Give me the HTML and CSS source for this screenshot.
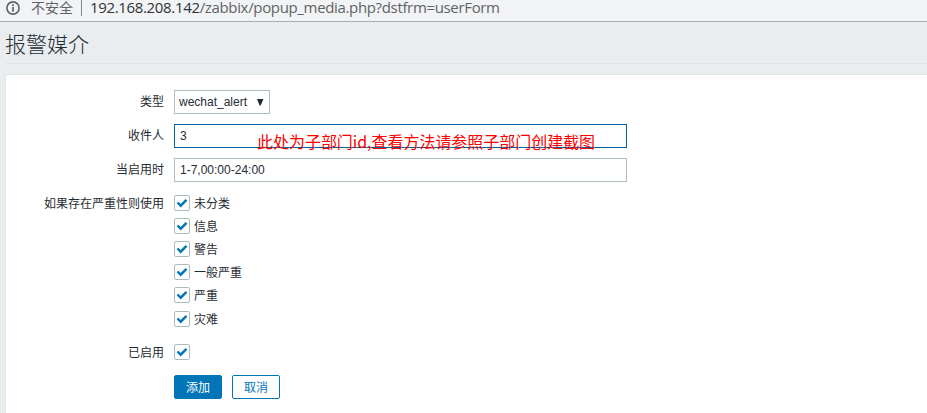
FILE: index.html
```
<!DOCTYPE html>
<html lang="zh-CN">
<head>
<meta charset="utf-8">
<title>报警媒介</title>
<link rel="stylesheet" href="styles.css">
</head>
<body>
<div class="address-bar">
  <svg class="info" width="14" height="14" viewBox="0 0 14 14"><circle cx="7" cy="7" r="6.1" fill="none" stroke="#5f6368" stroke-width="1.6"/><path d="M7 3.2v1.7M7 6v4.8" stroke="#5f6368" stroke-width="1.7"/></svg>
  <span class="insecure">不安全</span>
  <span class="divider"></span>
  <span class="url"><span class="host">192.168.208.142</span>/zabbix/popup_media.php?dstfrm=userForm</span>
</div>
<main>
  <h1>报警媒介</h1>
  <form class="card">
    <div class="row"><label>类型</label><div class="select"><span>wechat_alert</span><svg width="8" height="7" viewBox="0 0 8 7"><path d="M1 0h6.4L4.7 6.5h-1z" fill="#1f2c33"/></svg></div></div>
    <div class="row"><label>收件人</label><div class="field focused">3<span class="note">此处为子部门id,查看方法请参照子部门创建截图</span></div></div>
    <div class="row"><label>当启用时</label><div class="field">1-7,00:00-24:00</div></div>
    <div class="row severity"><label>如果存在严重性则使用</label>
      <div class="checks">
        <div class="check"><span class="box"><svg width="12" height="10" viewBox="0 0 12 10"><path d="M1.5 4.5 4.7 7.7 10.5 1.9"/></svg></span><span class="name">未分类</span></div>
        <div class="check"><span class="box"><svg width="12" height="10" viewBox="0 0 12 10"><path d="M1.5 4.5 4.7 7.7 10.5 1.9"/></svg></span><span class="name">信息</span></div>
        <div class="check"><span class="box"><svg width="12" height="10" viewBox="0 0 12 10"><path d="M1.5 4.5 4.7 7.7 10.5 1.9"/></svg></span><span class="name">警告</span></div>
        <div class="check"><span class="box"><svg width="12" height="10" viewBox="0 0 12 10"><path d="M1.5 4.5 4.7 7.7 10.5 1.9"/></svg></span><span class="name">一般严重</span></div>
        <div class="check"><span class="box"><svg width="12" height="10" viewBox="0 0 12 10"><path d="M1.5 4.5 4.7 7.7 10.5 1.9"/></svg></span><span class="name">严重</span></div>
        <div class="check last"><span class="box"><svg width="12" height="10" viewBox="0 0 12 10"><path d="M1.5 4.5 4.7 7.7 10.5 1.9"/></svg></span><span class="name">灾难</span></div>
      </div>
    </div>
    <div class="row enabled"><label>已启用</label><span class="box"><svg width="12" height="10" viewBox="0 0 12 10"><path d="M1.5 4.5 4.7 7.7 10.5 1.9"/></svg></span></div>
    <div class="actions"><button type="button" class="primary">添加</button><button type="button">取消</button></div>
  </form>
</main>
</body>
</html>
```
FILE: styles.css
```
* { box-sizing: border-box; }
body {
  margin: 0;
  height: 413px;
  overflow: hidden;
  background: #e9edf0;
  color: #1f2c33;
  font: 12px/16px "Liberation Sans", "Noto Sans CJK SC", sans-serif;
}
.address-bar {
  display: flex;
  height: 22px;
  padding-left: 6px;
  background: #f1f3f4;
  border-bottom: 1px solid #a9adb0;
  color: #5f6368;
  white-space: nowrap;
}
.info { margin-top: 1px; }
.insecure {
  margin-left: 11px;
  width: 43px;
  font: 14px/15px "Noto Sans CJK SC", sans-serif;
}
.divider { width: 1px; height: 16px; margin-left: 7px; background: #85888b; }
.url { margin-left: 8px; font: 15px/14px "Open Sans", sans-serif; letter-spacing: -.34px; }
.host { color: #303337; }
main { padding-left: 5px; }
h1 {
  height: 42px;
  margin: 0 0 10px;
  border-bottom: 1px solid #dfe4e7;
  font: 300 21px/43px "Noto Sans CJK SC", sans-serif;
}
.card {
  height: 345px;
  padding: 15px 0 0 10px;
  background: #fff;
  border: 1px solid #dfe4e7;
  border-right: 0;
}
.row { display: flex; margin-bottom: 10px; }
label {
  width: 148px;
  margin-right: 10px;
  text-align: right;
  line-height: 24px;
}
.select, .field { height: 24px; border: 1px solid #acbbc2; line-height: 22px; }
.select {
  display: flex;
  align-items: center;
  justify-content: space-between;
  width: 96px;
  padding: 0 5px 0 4px;
}
.field { position: relative; width: 453px; padding-left: 5px; }
.focused { border-color: #00619b; }
.note {
  position: absolute;
  left: 82px;
  top: 4px;
  color: #f00;
  white-space: nowrap;
  font: 16px/24px "Noto Sans CJK SC", sans-serif;
  letter-spacing: -.03px;
}
.severity { margin: 13px 0 17px; }
.severity label, .enabled label, .name { line-height: 18px; }
.checks { display: flex; flex-direction: column; gap: 7px; }
.check { display: flex; gap: 4px; height: 16px; }
.last { margin-top: 1px; }
.box {
  display: grid;
  place-items: center;
  width: 16px;
  height: 16px;
  border: 1px solid #acbbc2;
  border-radius: 2px;
  background: #fff;
}
.box path { fill: none; stroke: #0275b8; stroke-width: 2.4; }
.enabled { height: 16px; margin: 0; }
.actions { display: flex; gap: 10px; margin: 15px 0 0 158px; }
button {
  width: 48px;
  height: 24px;
  padding: 2px 0 0;
  border: 1px solid #0275b8;
  border-radius: 2px;
  background: #fff;
  color: #0275b8;
  font: inherit;
}
.primary { background: #0275b8; color: #fff; }
```
